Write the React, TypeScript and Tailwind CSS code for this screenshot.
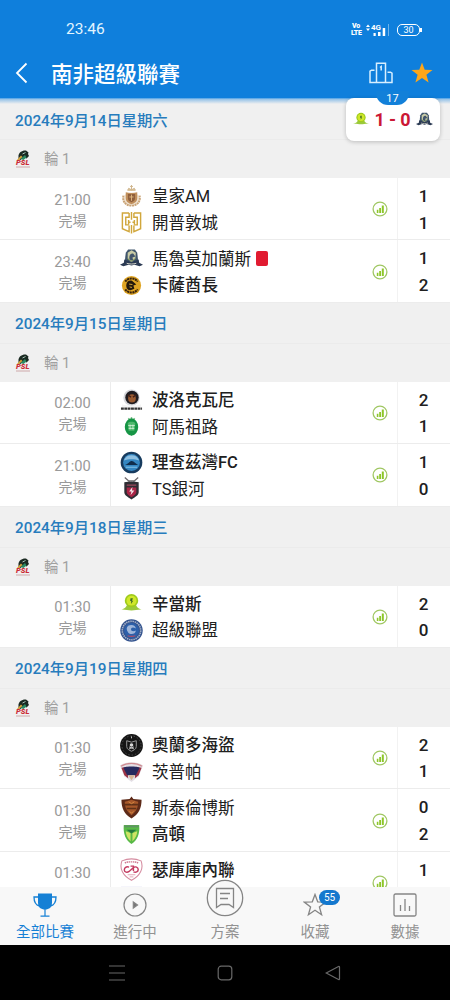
import { ReactNode } from "react";

type Team = {
  name: string;
  crest: ReactNode;
  score: number | null;
  winner?: boolean;
  redCard?: boolean;
};

type Match = { time: string; status?: string; home: Team; away: Team };

type Group = { date: string; matches: Match[] };

const Crest = ({ children }: { children?: ReactNode }) => (
  <svg viewBox="0 0 24 24" className="w-[23px] h-[23px] shrink-0">
    {children}
  </svg>
);

const RoyalCrest = () => (
  <Crest>
    <path d="M12 0v5M10.500 1.500h3M8 5.500l1-2 3 1.500 3-1.500 1 2z" stroke="#cfb48a" strokeWidth="1" fill="#dccaa6" />
    <ellipse cx="12" cy="15" rx="9.500" ry="7" fill="#efe2d0" />
    <path d="M3.500 11c-1 6 2 10.500 8.500 10.500S21.500 17 20.500 11" fill="none" stroke="#c9a376" strokeWidth="2" strokeDasharray="2 .7" />
    <path d="M6 7.500c4 1 8 1 12 0v6c0 4-3 5.500-6 6.500-3-1-6-2.500-6-6.500z" fill="#c08f5c" />
    <path d="M8.300 9.500h7.400v4.500c0 2-1.500 3-3.700 4-2.200-1-3.700-2-3.700-4z" fill="#8f5f3c" />
    <path d="M12 10v6.500M9.800 12.500h4.400" stroke="#dfb67d" />
  </Crest>
);

const CapeTownCrest = () => (
  <Crest>
    <g fill="none" stroke="#d1a73c" strokeWidth="1.500">
      <path d="M9.500 2H2.500v16.500L9.500 21.500V15" />
      <path d="M14.500 2h7v16.500l-7 3V15" />
      <path d="M9.500 2v4.500H6v8h3.500M14.500 2v4.500H18v8h-3.500" />
      <path d="M12 1v8M12 14.500v9M9 9.500v4.500M15 9.500v4.500M9 11.700h2M13 11.700h2" />
    </g>
  </Crest>
);

const MarumoCrest = () => (
  <Crest>
    <path d="M6 6l2.500-3.500h7L18 6l1 9H5z" fill="#40566d" />
    <path d="M8 6l4-2.500L16.500 6l-.5 6-4 3-4-3z" fill="#c9cba6" />
    <path d="M10 13c-1-4 1-7 4-6l2 3-3 1 1 4z" fill="#41546b" />
    <path d="M0 18.500l4-2 .5-3.500 7.500 2.500L19.500 13l.5 3.500 4 2-3.500 1.500-5.500-1.500-3 .8-3-.8L3.500 20z" fill="#2b3a53" />
    <path d="M7 17c3 1 7 1 10 0" fill="none" stroke="#d7d7ca" />
    <path d="M8 12l4 3 4-3" fill="none" stroke="#8ba056" />
  </Crest>
);

const ChiefsCrest = () => (
  <Crest>
    <circle cx="12" cy="12" r="10" fill="#dfa423" />
    <path d="M5.500 8a8 8 0 0113 0M5.500 16a8 8 0 0013 0" fill="none" stroke="#39240c" strokeWidth="2.200" strokeDasharray="2.200 .6" />
    <path d="M6.500 12c0-4 3-6 6-5l4.500 4-3 1 1 3.500-4 1.500c-3 0-4.500-2-4.500-5z" fill="#23180c" />
    <path d="M9.500 10.500l3.500.5M10 13.500l2.500.5" stroke="#d8a83a" />
  </Crest>
);

const PolokwaneCrest = () => (
  <Crest>
    <circle cx="12" cy="9" r="8.500" fill="#d5d6da" />
    <circle cx="12.500" cy="8.800" r="7" fill="#1f1c20" />
    <ellipse cx="12.500" cy="9.800" rx="4" ry="4.200" fill="#9a5a30" />
    <path d="M8 6l3.500 2.500M17 6l-3.500 2.500" stroke="#422017" strokeWidth="1.500" />
    <path d="M2 16c5 2 15 2 20 0v3H2z" fill="#f4f4f4" />
    <path d="M1 20.500h22" stroke="#353535" strokeWidth="2.200" strokeDasharray="3 .5" />
  </Crest>
);

const AmaZuluCrest = () => (
  <Crest>
    <path d="M12 2v20M8.500 3.500L12 6l3.500-2.500" stroke="#7fc18d" strokeWidth="1.500" fill="none" />
    <ellipse cx="12" cy="12.500" rx="7" ry="9" fill="#169545" />
    <path d="M8 8.500c1.500-2 6.500-2 8 0l-1 8H9z" fill="#4fb76c" />
    <path d="M8.500 11h7M9 14h6M10.500 10v5M13.500 10v5" stroke="#d9f3dd" strokeWidth=".8" />
  </Crest>
);

const RichardsBayCrest = () => (
  <Crest>
    <circle cx="12" cy="12" r="11.300" fill="#173b5e" />
    <circle cx="12" cy="12" r="8.800" fill="#3487c2" />
    <path d="M4 10a8.500 8.500 0 0116 0c-5-2-11-2-16 0z" fill="#8fbfe0" />
    <path d="M5 14.500c3 0 4-3 6.500-4s5 3 7.500 4z" fill="#102d4b" />
    <path d="M6 17h12" stroke="#6eb2dd" strokeWidth="1.500" />
  </Crest>
);

const GalaxyCrest = () => (
  <Crest>
    <path d="M5 .5l5 4.500M19 .5L14 5M9 4h6" stroke="#6d686b" strokeWidth="1.300" />
    <path d="M4.500 5.500c5-1 10-1 15 0V16c0 3-3.500 5-7.500 7.500C8 21 4.500 19 4.500 16z" fill="#2e2d33" />
    <path d="M7 11h10v5c0 2-2 3.500-5 5-3-1.500-5-3-5-5z" fill="#a92445" />
    <path d="M7 8.500h10" stroke="#8f4557" strokeWidth="1.500" />
    <path d="M13 10.500l-3.500 4.500H12l-1 4 4-5h-2.500z" fill="#f3e7e9" />
  </Crest>
);

const SundownsCrest = () => (
  <Crest>
    <path d="M0 18.500c5-1 6-2.500 7-4.500h10c1 2 2 3.500 7 4.500-5-.5-8 .8-12 .8s-7-1.300-12-.8z" fill="#9bc93b" />
    <circle cx="12" cy="9" r="7" fill="#9fcb1c" />
    <circle cx="12" cy="9" r="5.200" fill="#d0e82a" />
    <path d="M11 6.500h2.500L12.500 9h1.300L11.500 12.500l.2-3h-1.200z" fill="#426d28" />
  </Crest>
);

const SuperSportCrest = () => (
  <Crest>
    <circle cx="12" cy="12" r="11.700" fill="#34548f" />
    <circle cx="12" cy="12" r="9.600" fill="none" stroke="#a9b4c9" strokeWidth="1.600" strokeDasharray="1.500 .8" />
    <circle cx="12" cy="12" r="7.800" fill="#2d60aa" />
    <path d="M8.500 7c4-2 8 0 8 3-3-2-5-1-5 1s3 2 5 1c0 4-6 5-8 2s-2-5 0-7z" fill="#9fb6da" />
    <path d="M8 17.500c3 1 5 1 8 0" stroke="#b44b64" strokeWidth="1.300" fill="none" />
  </Crest>
);

const PiratesCrest = () => (
  <Crest>
    <circle cx="12" cy="12" r="11.900" fill="#151515" />
    <circle cx="12" cy="12" r="10" fill="none" stroke="#666" strokeWidth=".7" strokeDasharray="1.500 2" />
    <path d="M7 7l5 1.500L17 7v6c0 3-3 4-5 5-2-1-5-2-5-5z" fill="none" stroke="#9a9a9a" strokeWidth="1" />
    <circle cx="12" cy="11.500" r="1.900" fill="#d8d8d8" />
    <path d="M9.500 15.500l5-2M14.500 15.500l-5-2M12 2.500v2" stroke="#c8c8c8" />
  </Crest>
);

const ChippaCrest = () => (
  <Crest>
    <path d="M0 6c4-4.500 20-4.500 24 0l-4.500 11-7.500 6-7.500-6z" fill="#e4e0e6" />
    <path d="M1 6.500c6-4 16-4 22 0" fill="none" stroke="#cf8b91" strokeWidth="1.500" />
    <path d="M1.500 8l6-1 1 12-4-3zM22.500 8l-6-1-1 12 4-3z" fill="#9b3345" />
    <path d="M3.500 8c5-1.500 12-1.500 17 0l-4 8h-9z" fill="#262a5e" />
    <path d="M8.500 16h7l-3.500 5z" fill="#d8b795" />
  </Crest>
);

const StellenboschCrest = () => (
  <Crest>
    <path d="M12 .5l2 2.500 8.500 1c0 9-3 15-10.500 19.500C4.500 19 1.500 13 1.500 4L10 3z" fill="#5d2a18" />
    <path d="M12 4l7 2c0 6-2 10-7 14C7 16 5 12 5 6z" fill="#a6572a" />
    <path d="M5 9h14M7 13h10" stroke="#5e3017" strokeWidth="1.600" />
    <path d="M9 6l3 2 3-2M10 16l2 2 2-2" fill="none" stroke="#d58a42" />
  </Crest>
);

const ArrowsCrest = () => (
  <Crest>
    <path d="M4 2h16c1 9-2 16-8 20C6 18 3 11 4 2z" fill="#58b947" />
    <path d="M4.500 2.500h15v2h-15z" fill="#5f9463" />
    <path d="M6 8.500l5 2v8.500c-3-3-5-7-5-10.500zM18 8.500l-5 2v8.500c3-3 5-7 5-10.500z" fill="#cfe465" />
    <path d="M7 7h10l-5 4z" fill="#26793e" />
  </Crest>
);

const SekhukhuneCrest = () => (
  <Crest>
    <path d="M2 3c6-2.500 14-2.500 20 0 3 8-1 15.500-10 20.300C3 18.500-1 11 2 3z" fill="#fff" stroke="#d58ca0" strokeWidth="1.100" />
    <path d="M5 5c4-1.300 10-1.300 14 0" stroke="#cf7890" strokeWidth="1.500" strokeDasharray="1.500 .6" fill="none" />
    <path d="M9.500 9.500c-3-1-5 .5-5 3s3 3 5 1.500L14 10c2-1.500 5-.5 5 2s-2.500 3.500-5 2.500M11 8.500h3v5" fill="none" stroke="#c43b61" strokeWidth="1.500" />
    <path d="M8 17.500h8M10 19.700h4" stroke="#e2a3b4" />
  </Crest>
);

const MagesiCrest = () => (
  <Crest>
    <path d="M1 2h22v3H1z" fill="#8488c8" />
  </Crest>
);

const LeagueLogo = () => (
  <svg viewBox="0 0 16 18" className="w-4 h-[18px]">
    <path d="M3.500 7C3 2 8 0 11 .5l2.500 2L13 4l1 2-2.500 2.500-3-1.500-3 3-2-1z" fill="#1b2a22" />
    <path d="M1.500 10.500L6 5.500 7.500 7 3.500 10.500z" fill="#d8a43a" />
    <path d="M5.500 9l4.500-4 1.500 2.500L8.500 10z" fill="#2a8a62" />
    <path d="M7.500 4l3-1.500" stroke="#a8c5b8" />
    <text
      x="1"
      y="15.3"
      fontSize="6.5"
      fontWeight="900"
      fontStyle="italic"
      fontFamily="Roboto, sans-serif"
      fill="#cc2c38"
      textLength="13.500"
      lengthAdjust="spacingAndGlyphs"
    >
      PSL
    </text>
    <path d="M1 17h14" stroke="#c9a0a2" strokeWidth=".9" />
  </svg>
);

const groups: Group[] = [
  {
    date: "2024年9月14日星期六",
    matches: [
      {
        time: "21:00",
        status: "完場",
        home: { name: "皇家AM", crest: <RoyalCrest />, score: 1 },
        away: { name: "開普敦城", crest: <CapeTownCrest />, score: 1 },
      },
      {
        time: "23:40",
        status: "完場",
        home: { name: "馬魯莫加蘭斯", crest: <MarumoCrest />, score: 1, redCard: true },
        away: { name: "卡薩酋長", crest: <ChiefsCrest />, score: 2, winner: true },
      },
    ],
  },
  {
    date: "2024年9月15日星期日",
    matches: [
      {
        time: "02:00",
        status: "完場",
        home: { name: "波洛克瓦尼", crest: <PolokwaneCrest />, score: 2, winner: true },
        away: { name: "阿馬祖路", crest: <AmaZuluCrest />, score: 1 },
      },
      {
        time: "21:00",
        status: "完場",
        home: { name: "理查茲灣FC", crest: <RichardsBayCrest />, score: 1, winner: true },
        away: { name: "TS銀河", crest: <GalaxyCrest />, score: 0 },
      },
    ],
  },
  {
    date: "2024年9月18日星期三",
    matches: [
      {
        time: "01:30",
        status: "完場",
        home: { name: "辛當斯", crest: <SundownsCrest />, score: 2, winner: true },
        away: { name: "超級聯盟", crest: <SuperSportCrest />, score: 0 },
      },
    ],
  },
  {
    date: "2024年9月19日星期四",
    matches: [
      {
        time: "01:30",
        status: "完場",
        home: { name: "奧蘭多海盜", crest: <PiratesCrest />, score: 2, winner: true },
        away: { name: "茨普帕", crest: <ChippaCrest />, score: 1 },
      },
      {
        time: "01:30",
        status: "完場",
        home: { name: "斯泰倫博斯", crest: <StellenboschCrest />, score: 0 },
        away: { name: "高頓", crest: <ArrowsCrest />, score: 2, winner: true },
      },
      {
        time: "01:30",
        home: { name: "瑟庫庫內聯", crest: <SekhukhuneCrest />, score: 1, winner: true },
        away: { name: "", crest: <MagesiCrest />, score: null },
      },
    ],
  },
];

const StatusBar = () => (
  <div className="h-[58px] flex items-center justify-between pl-[66px] pr-[28px] pt-px text-white">
    <span className="text-[15.5px] text-[#e2f5ff]">23:46</span>
    <div className="flex items-center">
      <div className="w-[10px] mr-[5px] text-[7px] leading-[6.5px] font-black text-center tracking-[-0.3px]">
        <div>Vo</div>
        <div>LTE</div>
      </div>
      <svg viewBox="0 0 24 14" className="w-6 h-3.5 mr-[7px]" fill="#fff">
        <path d="M0 4L2 1.500 4 4zM0 5.500L2 8l2-2.500z" />
        <text x="5" y="7.300" fontSize="8" fontWeight="700" fontFamily="Roboto, sans-serif">4G</text>
        <path d="M7.500 10h2.200v3H7.500zM12 9h2.500v4H12zM16.700 5h2.500v8h-2.500z" />
        <path d="M22 1h1v12h-1z" opacity=".4" />
      </svg>
      <div className="w-[23px] h-3 rounded-[5px] border border-white text-[9px] leading-[10px] text-center">30</div>
      <div className="w-0.5 h-1 bg-white" />
    </div>
  </div>
);

const Header = () => (
  <header className="h-[98px] shrink-0 bg-[#0f7fdc] text-white">
    <StatusBar />
    <div className="h-[30px] flex items-center pl-[15px] pr-[17px]">
      <svg viewBox="0 0 14 22" className="w-3.5 h-[22px]" fill="none" stroke="#fff" strokeWidth="1.800">
        <path d="M11.500 1.500L2 11l9.500 9.500" />
      </svg>
      <h1 className="ml-[22px] mt-[3px] text-[21.5px] leading-[30px] font-medium">南非超級聯賽</h1>
      <svg viewBox="0 0 24 22" className="w-6 h-[22px] ml-auto" fill="none" stroke="#d8efff" strokeWidth="1.500">
        <path d="M7.500 20.500V1.200h9v19.300M5.500 8.200H2.500l-1.500 1v11.300h22V11.200l-1.500-1h-3M5 20.500h14" />
        <path d="M11 5.500l1.200-1v4" />
      </svg>
      <svg viewBox="0 0 22 22" className="w-[22px] h-[22px] ml-[18px]" fill="#fda619">
        <path d="M11 .5l2.700 7.200 7.800.3-6.100 4.800 2.200 7.600L11 16.100l-6.600 4.300 2.200-7.600L.5 8l7.800-.3z" />
      </svg>
    </div>
  </header>
);

const LiveScore = () => (
  <div className="absolute top-[98px] left-[346px] w-[94px] h-[43px] rounded-lg bg-white shadow-[0_1px_4px_rgba(0,0,0,0.22)] flex items-center justify-between px-[7px]">
    <div className="absolute -top-[7px] left-[30px] w-[33px] h-[14px] rounded-b-[12px] bg-[#1280d9] text-white text-[11px] leading-[15px] text-center">
      17
    </div>
    <div className="w-4 h-[22px] flex items-center justify-center [&>svg]:w-4">
      <SundownsCrest />
    </div>
    <span className="text-[18px] font-bold text-[#cb1735] whitespace-nowrap tracking-[-0.1px]">1 - 0</span>
    <div className="w-[17px] h-[22px] flex items-center justify-center [&>svg]:w-[17px]">
      <MarumoCrest />
    </div>
  </div>
);

const StatsIcon = () => (
  <svg viewBox="0 0 16 16" className="w-4 h-4" fill="#8dc629">
    <circle cx="8" cy="8" r="6.900" fill="none" stroke="#a0c763" strokeWidth="1.300" />
    <path d="M4.800 8.800h1.600V12H4.800zM7.200 7h1.800v5H7.200zM9.800 4.500h2V12h-2z" />
  </svg>
);

const TeamLine = ({ team }: { team: Team }) => (
  <div className="h-[26.5px] flex items-center">
    {team.crest}
    <span
      className={`ml-[9px] mt-[2px] text-[16.5px] leading-[26px] whitespace-nowrap text-[#202020] ${
        team.winner ? "font-medium" : "font-normal"
      }`}
    >
      {team.name}
    </span>
    {team.redCard && <span className="ml-[5px] w-3 h-[15px] rounded-[2px] bg-[#e11b31]" />}
  </div>
);

const MatchRow = ({ match }: { match: Match }) => (
  <div className="h-[62.4px] flex bg-white border-b border-[#ececec]">
    <div className="w-[111px] shrink-0 border-r border-[#ececec] pl-[35px] pt-[11.5px] text-center text-[#999]">
      <div className="text-[14.7px] leading-5">{match.time}</div>
      <div className="text-sm leading-[22px]">{match.status}</div>
    </div>
    <div className="flex-1 pl-[9px] pt-[5px]">
      <TeamLine team={match.home} />
      <TeamLine team={match.away} />
    </div>
    <div className="w-[25px] flex items-center mt-[1px]">
      <StatsIcon />
    </div>
    <div className="w-[53px] border-l border-[#f2f2f2] pt-[5px] pr-px text-center text-[17px] leading-[26.5px] font-medium text-[#202020]">
      <div>{match.home.score}</div>
      <div>{match.away.score}</div>
    </div>
  </div>
);

const GroupSection = ({ group }: { group: Group }) => (
  <section>
    <div className="h-[41px] flex items-center bg-[#f0f0f0] border-b border-[#ebebeb] pl-[15px] pt-[4px] text-[15.3px] font-medium text-[#277cbd]">
      {group.date}
    </div>
    <div className="h-[38px] flex items-center bg-[#f0f0f0] pl-[15px] text-[14.5px] text-[#a0a0a0]">
      <LeagueLogo />
      <span className="ml-[13px] mt-[2px]">輪 1</span>
    </div>
    {group.matches.map((match, i) => (
      <MatchRow key={i} match={match} />
    ))}
  </section>
);

const NavItem = ({ label, active, children }: { label: string; active?: boolean; children: ReactNode }) => (
  <div
    className={`relative w-[90px] flex flex-col items-center text-[14.5px] ${
      active ? "text-[#1580d5]" : "text-[#929292]"
    }`}
  >
    <div className="h-[34px] flex items-end pb-1">{children}</div>
    <span className="mt-[1.5px] leading-5">{label}</span>
  </div>
);

const BottomNav = () => (
  <nav className="h-[58px] shrink-0 flex bg-[#f8f8f8] relative">
    <NavItem label="全部比賽" active>
      <svg viewBox="0 0 24 24" className="w-6 h-6" fill="#1580d5">
        <path d="M5 .5h14v9c0 5-3 7-7 7s-7-2-7-7z" />
        <path d="M5 4H1c0 5 1.500 8 5.500 9M19 4h4c0 5-1.500 8-5.500 9" fill="none" stroke="#1580d5" strokeWidth="1.300" />
        <path d="M11.400 16h1.200v6.500h-1.200zM7.500 22.500h9v1.300h-9z" />
      </svg>
    </NavItem>
    <NavItem label="進行中">
      <svg viewBox="0 0 24 24" className="w-6 h-6" fill="none" stroke="#858585" strokeWidth="1.200">
        <circle cx="12" cy="12" r="11" />
        <path d="M10.300 9l4.200 3-4.200 3z" fill="#777" />
      </svg>
    </NavItem>
    <NavItem label="方案">
      <svg viewBox="0 0 38 38" className="w-[38px] h-[38px] shrink-0" fill="none" stroke="#858585" strokeWidth="1.300">
        <circle cx="19" cy="19" r="17.700" fill="#f8f8f8" />
        <path d="M10.500 9.500h17v19l-4.500-3h-8l-4.500 3z" />
        <path d="M14 14.500h10M14 19.500h8" />
      </svg>
    </NavItem>
    <NavItem label="收藏">
      <svg viewBox="0 0 24 24" className="w-6 h-6" fill="none" stroke="#858585" strokeWidth="1.300">
        <path d="M12 1.500l2.700 7.300 8 .3-6.300 4.900 2.200 7.700L12 17.300l-6.600 4.400L7.600 14 1.300 9.100l8-.3z" />
      </svg>
      <span className="absolute top-[3px] left-[49px] w-[21px] h-[15px] rounded-full bg-[#1478ce] text-white text-[10px] leading-[15px] text-center">
        55
      </span>
    </NavItem>
    <NavItem label="數據">
      <svg viewBox="0 0 24 24" className="w-6 h-6" fill="none" stroke="#858585" strokeWidth="1.300">
        <rect x="1" y="1" width="22" height="22" rx="1.500" />
        <path d="M7.500 12v6M12 6v12M16.500 13v5" />
      </svg>
    </NavItem>
  </nav>
);

const SystemNav = () => (
  <div className="h-[55px] shrink-0 bg-black flex items-center justify-center gap-[92px]">
    <svg viewBox="0 0 16 16" className="w-4 h-4" stroke="#696969" strokeWidth="1.200">
      <path d="M0 1h16M0 8h16M0 15h16" />
    </svg>
    <svg viewBox="0 0 16 16" className="w-4 h-4" fill="none" stroke="#696969" strokeWidth="1.200">
      <rect x="1.200" y="1.200" width="13.600" height="13.600" rx="3" />
    </svg>
    <svg viewBox="0 0 16 16" className="w-4 h-4" fill="none" stroke="#696969" strokeWidth="1.200">
      <path d="M13.500 1.500L1.200 8l12.300 6.500q1 .4 1-.8V2.300q0-1.200-1-.8z" />
    </svg>
  </div>
);

const App = () => {
  return (
    <div className="relative w-[450px] h-[1000px] flex flex-col overflow-hidden bg-white font-['Roboto','Noto_Sans_CJK_TC',sans-serif]">
      <Header />
      <main className="flex-1 min-h-0 overflow-hidden pt-[1px] bg-[#a9cff0]">
        {groups.map((group) => (
          <GroupSection key={group.date} group={group} />
        ))}
      </main>
      <div className="absolute top-[98px] left-0 w-full h-[6px] bg-linear-to-b from-[#0f7fdc]/50 to-transparent" />
      <LiveScore />
      <BottomNav />
      <SystemNav />
    </div>
  );
};

export default App;
